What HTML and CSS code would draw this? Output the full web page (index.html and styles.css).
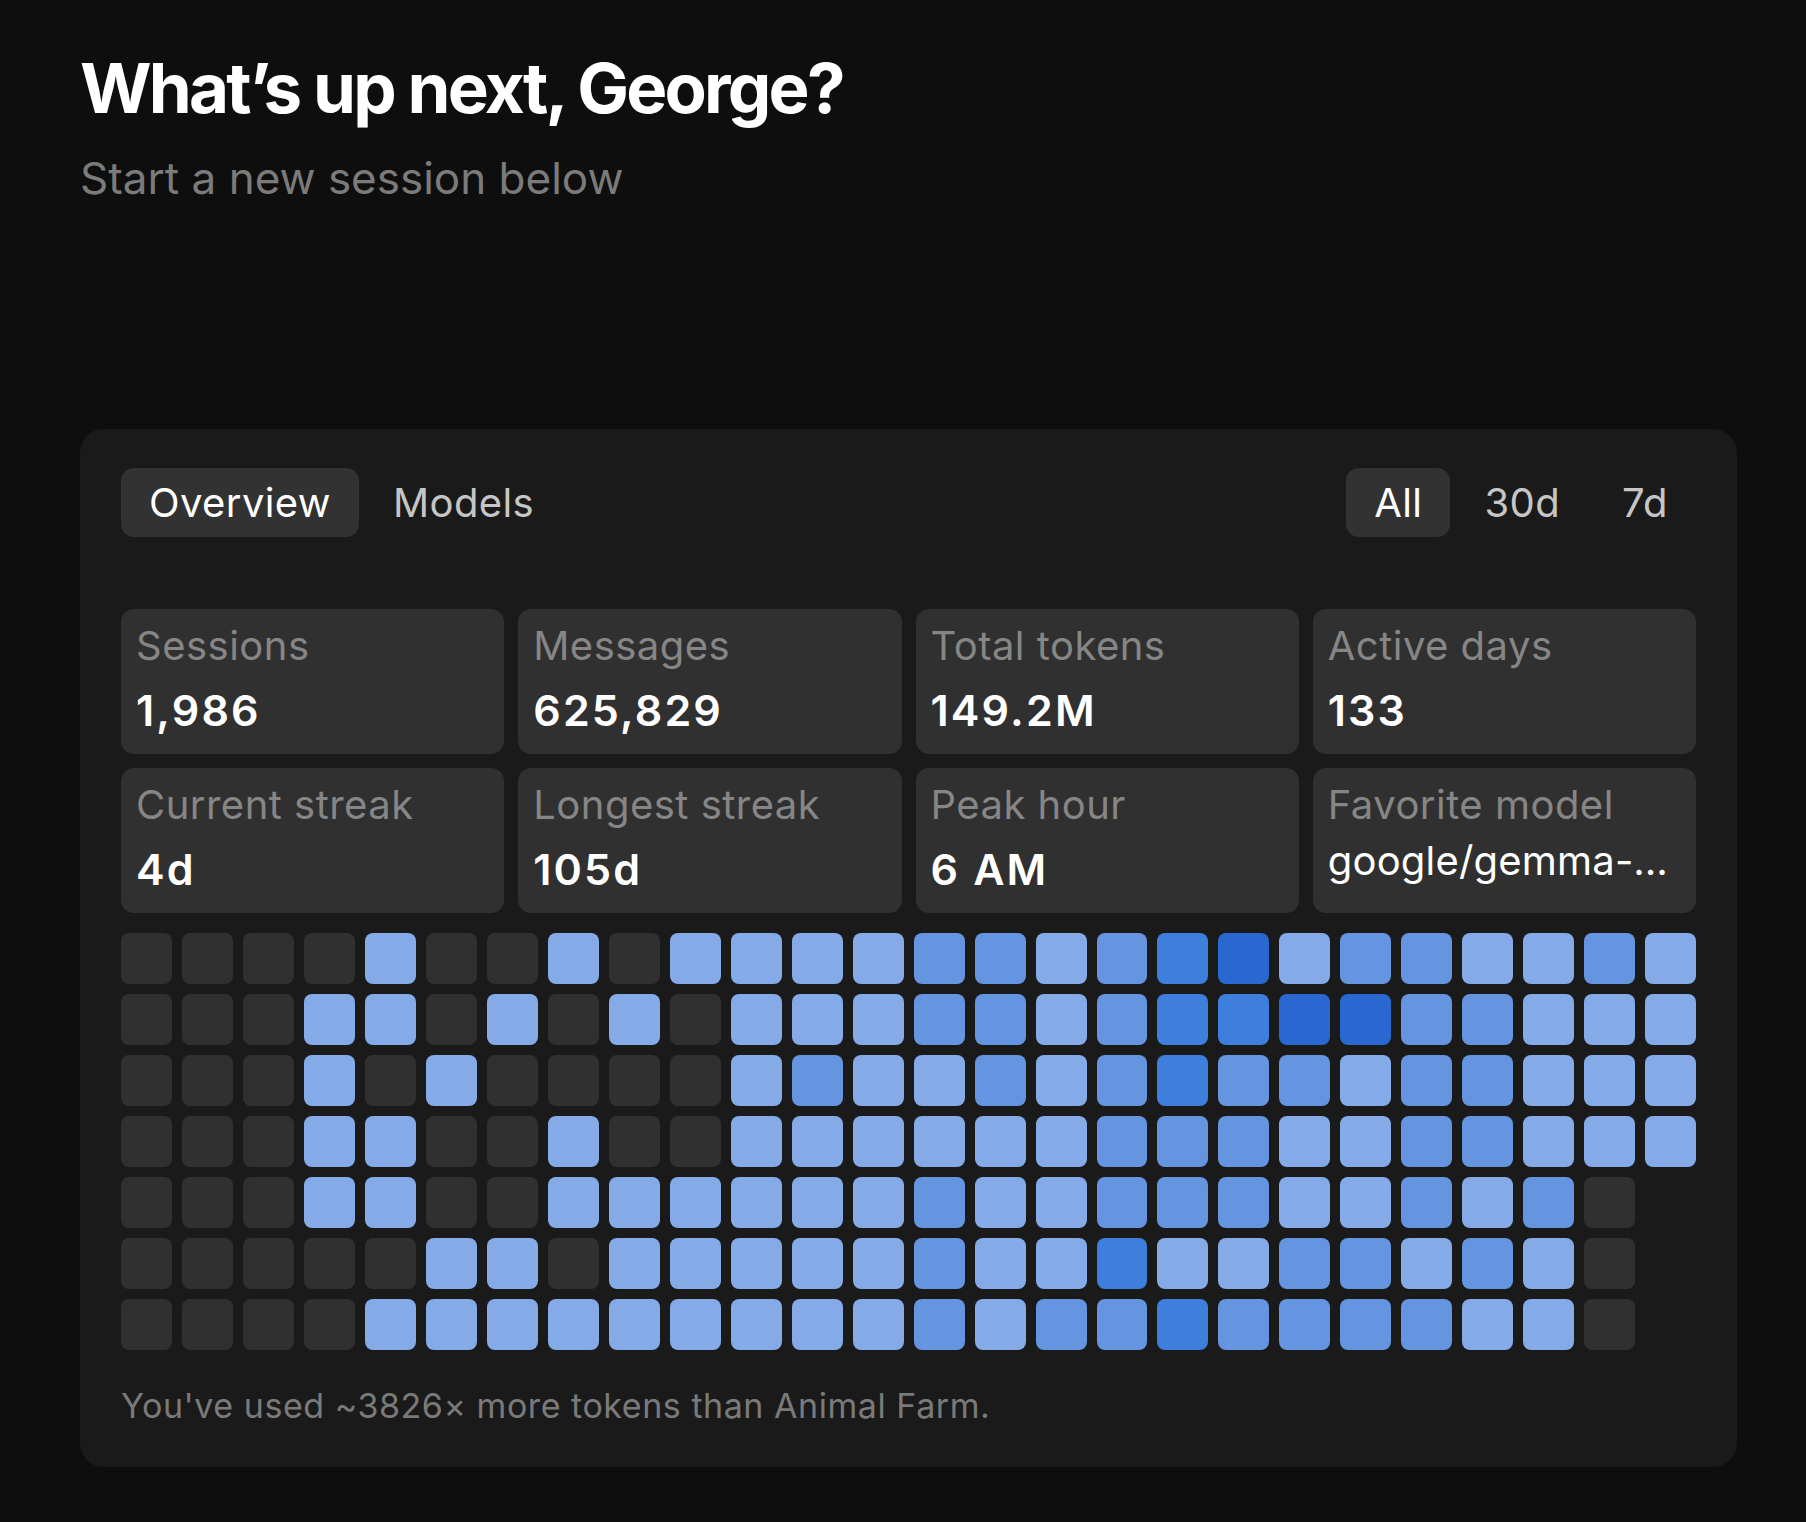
FILE: index.html
```html
<!DOCTYPE html>
<html lang="en">
<head>
<meta charset="utf-8">
<title>Home</title>
<link rel="stylesheet" href="styles.css">
</head>
<body>
<main class="page">
  <h1 class="title">What’s up next, George?</h1>
  <p class="subtitle">Start a new session below</p>

  <section class="panel">
    <div class="panel-head">
      <div class="tabs">
        <button class="tab active">Overview</button>
        <button class="tab">Models</button>
      </div>
      <div class="tabs">
        <button class="tab active">All</button>
        <button class="tab">30d</button>
        <button class="tab">7d</button>
      </div>
    </div>

    <div class="stats">
      <div class="stat"><div class="label">Sessions</div><div class="value">1,986</div></div>
      <div class="stat"><div class="label">Messages</div><div class="value">625,829</div></div>
      <div class="stat"><div class="label">Total tokens</div><div class="value">149.2M</div></div>
      <div class="stat"><div class="label">Active days</div><div class="value">133</div></div>
      <div class="stat"><div class="label">Current streak</div><div class="value">4d</div></div>
      <div class="stat"><div class="label">Longest streak</div><div class="value">105d</div></div>
      <div class="stat"><div class="label">Peak hour</div><div class="value">6 AM</div></div>
      <div class="stat"><div class="label">Favorite model</div><div class="value model">google/gemma-3-27b-it</div></div>
    </div>

    <div class="heatmap">
      <!-- c1 -->
      <span class="cell l0"></span><span class="cell l0"></span><span class="cell l0"></span><span class="cell l0"></span><span class="cell l0"></span><span class="cell l0"></span><span class="cell l0"></span>
      <!-- c2 -->
      <span class="cell l0"></span><span class="cell l0"></span><span class="cell l0"></span><span class="cell l0"></span><span class="cell l0"></span><span class="cell l0"></span><span class="cell l0"></span>
      <!-- c3 -->
      <span class="cell l0"></span><span class="cell l0"></span><span class="cell l0"></span><span class="cell l0"></span><span class="cell l0"></span><span class="cell l0"></span><span class="cell l0"></span>
      <!-- c4 0111100 -->
      <span class="cell l0"></span><span class="cell l1"></span><span class="cell l1"></span><span class="cell l1"></span><span class="cell l1"></span><span class="cell l0"></span><span class="cell l0"></span>
      <!-- c5 1101101 -->
      <span class="cell l1"></span><span class="cell l1"></span><span class="cell l0"></span><span class="cell l1"></span><span class="cell l1"></span><span class="cell l0"></span><span class="cell l1"></span>
      <!-- c6 0010011 -->
      <span class="cell l0"></span><span class="cell l0"></span><span class="cell l1"></span><span class="cell l0"></span><span class="cell l0"></span><span class="cell l1"></span><span class="cell l1"></span>
      <!-- c7 0100011 -->
      <span class="cell l0"></span><span class="cell l1"></span><span class="cell l0"></span><span class="cell l0"></span><span class="cell l0"></span><span class="cell l1"></span><span class="cell l1"></span>
      <!-- c8 1001101 -->
      <span class="cell l1"></span><span class="cell l0"></span><span class="cell l0"></span><span class="cell l1"></span><span class="cell l1"></span><span class="cell l0"></span><span class="cell l1"></span>
      <!-- c9 0100111 -->
      <span class="cell l0"></span><span class="cell l1"></span><span class="cell l0"></span><span class="cell l0"></span><span class="cell l1"></span><span class="cell l1"></span><span class="cell l1"></span>
      <!-- c10 1000111 -->
      <span class="cell l1"></span><span class="cell l0"></span><span class="cell l0"></span><span class="cell l0"></span><span class="cell l1"></span><span class="cell l1"></span><span class="cell l1"></span>
      <!-- c11 1111111 -->
      <span class="cell l1"></span><span class="cell l1"></span><span class="cell l1"></span><span class="cell l1"></span><span class="cell l1"></span><span class="cell l1"></span><span class="cell l1"></span>
      <!-- c12 1121111 -->
      <span class="cell l1"></span><span class="cell l1"></span><span class="cell l2"></span><span class="cell l1"></span><span class="cell l1"></span><span class="cell l1"></span><span class="cell l1"></span>
      <!-- c13 1111111 -->
      <span class="cell l1"></span><span class="cell l1"></span><span class="cell l1"></span><span class="cell l1"></span><span class="cell l1"></span><span class="cell l1"></span><span class="cell l1"></span>
      <!-- c14 2211222 -->
      <span class="cell l2"></span><span class="cell l2"></span><span class="cell l1"></span><span class="cell l1"></span><span class="cell l2"></span><span class="cell l2"></span><span class="cell l2"></span>
      <!-- c15 2221111 -->
      <span class="cell l2"></span><span class="cell l2"></span><span class="cell l2"></span><span class="cell l1"></span><span class="cell l1"></span><span class="cell l1"></span><span class="cell l1"></span>
      <!-- c16 1111112 -->
      <span class="cell l1"></span><span class="cell l1"></span><span class="cell l1"></span><span class="cell l1"></span><span class="cell l1"></span><span class="cell l1"></span><span class="cell l2"></span>
      <!-- c17 2222232 -->
      <span class="cell l2"></span><span class="cell l2"></span><span class="cell l2"></span><span class="cell l2"></span><span class="cell l2"></span><span class="cell l3"></span><span class="cell l2"></span>
      <!-- c18 3332213 -->
      <span class="cell l3"></span><span class="cell l3"></span><span class="cell l3"></span><span class="cell l2"></span><span class="cell l2"></span><span class="cell l1"></span><span class="cell l3"></span>
      <!-- c19 4322212 -->
      <span class="cell l4"></span><span class="cell l3"></span><span class="cell l2"></span><span class="cell l2"></span><span class="cell l2"></span><span class="cell l1"></span><span class="cell l2"></span>
      <!-- c20 1421122 -->
      <span class="cell l1"></span><span class="cell l4"></span><span class="cell l2"></span><span class="cell l1"></span><span class="cell l1"></span><span class="cell l2"></span><span class="cell l2"></span>
      <!-- c21 2411122 -->
      <span class="cell l2"></span><span class="cell l4"></span><span class="cell l1"></span><span class="cell l1"></span><span class="cell l1"></span><span class="cell l2"></span><span class="cell l2"></span>
      <!-- c22 2222212 -->
      <span class="cell l2"></span><span class="cell l2"></span><span class="cell l2"></span><span class="cell l2"></span><span class="cell l2"></span><span class="cell l1"></span><span class="cell l2"></span>
      <!-- c23 1222121 -->
      <span class="cell l1"></span><span class="cell l2"></span><span class="cell l2"></span><span class="cell l2"></span><span class="cell l1"></span><span class="cell l2"></span><span class="cell l1"></span>
      <!-- c24 1111211 -->
      <span class="cell l1"></span><span class="cell l1"></span><span class="cell l1"></span><span class="cell l1"></span><span class="cell l2"></span><span class="cell l1"></span><span class="cell l1"></span>
      <!-- c25 2111000 -->
      <span class="cell l2"></span><span class="cell l1"></span><span class="cell l1"></span><span class="cell l1"></span><span class="cell l0"></span><span class="cell l0"></span><span class="cell l0"></span>
      <!-- c26 1111 -->
      <span class="cell l1"></span><span class="cell l1"></span><span class="cell l1"></span><span class="cell l1"></span>
    </div>

    <p class="note">You've used ~3826× more tokens than Animal Farm.</p>
  </section>
</main>
</body>
</html>
```

FILE: styles.css
```css
* {
  box-sizing: border-box;
}

html, body {
  margin: 0;
  padding: 0;
  background: #0e0e0e;
}

body {
  font-family: Inter, "Noto Sans", "Liberation Sans", sans-serif;
  color: #ffffff;
}

.page {
  padding: 46px 0 0 80px;
  width: 1737px;
}

.title {
  margin: 0;
  font-size: 69px;
  line-height: 84px;
  font-weight: 700;
  letter-spacing: -0.04em;
  color: #ffffff;
}

.subtitle {
  margin: 22px 0 0;
  font-size: 44px;
  line-height: 52px;
  font-weight: 400;
  color: #7b7b7b;
}

.panel {
  margin-top: 225px;
  width: 1657px;
  background: #1a1a1a;
  border-radius: 24px;
  padding: 39px 41px 41px;
}

.panel-head {
  display: flex;
  justify-content: space-between;
  align-items: center;
}

.tabs {
  display: flex;
  gap: 6px;
}

.tab {
  font-family: inherit;
  font-size: 40px;
  line-height: 49px;
  font-weight: 400;
  letter-spacing: 0.01em;
  padding: 10px 28px;
  border: 0;
  border-radius: 13px;
  background: transparent;
  color: #c6c6c6;
}

.tab.active {
  background: #323232;
  color: #ffffff;
}

.stats {
  margin-top: 72px;
  display: grid;
  grid-template-columns: repeat(4, 1fr);
  gap: 14px;
}

.stat {
  background: #303030;
  border-radius: 13px;
  padding: 13px 15px 18px;
  min-width: 0;
}

.label {
  font-size: 40px;
  line-height: 48px;
  letter-spacing: 0.012em;
  color: #868686;
  white-space: nowrap;
}

.value {
  margin-top: 14px;
  font-size: 43px;
  line-height: 52px;
  font-weight: 600;
  color: #ffffff;
  letter-spacing: 0.05em;
}

.value.model {
  margin-top: 8px;
  font-size: 40px;
  line-height: 48px;
  font-weight: 400;
  letter-spacing: 0.005em;
  white-space: nowrap;
  overflow: hidden;
  text-overflow: ellipsis;
}

.heatmap {
  margin-top: 20px;
  display: grid;
  grid-template-columns: repeat(26, 1fr);
  grid-template-rows: repeat(7, auto);
  grid-auto-flow: column;
  gap: 10px;
}

.cell {
  aspect-ratio: 1 / 1;
  border-radius: 8px;
}

.l0 { background: #303030; }
.l1 { background: #84abe8; }
.l2 { background: #6595e0; }
.l3 { background: #3e7edc; }
.l4 { background: #2868d0; }

.note {
  margin: 36px 0 0;
  font-size: 34px;
  line-height: 40px;
  letter-spacing: 0.016em;
  color: #7a7a7a;
}
```
